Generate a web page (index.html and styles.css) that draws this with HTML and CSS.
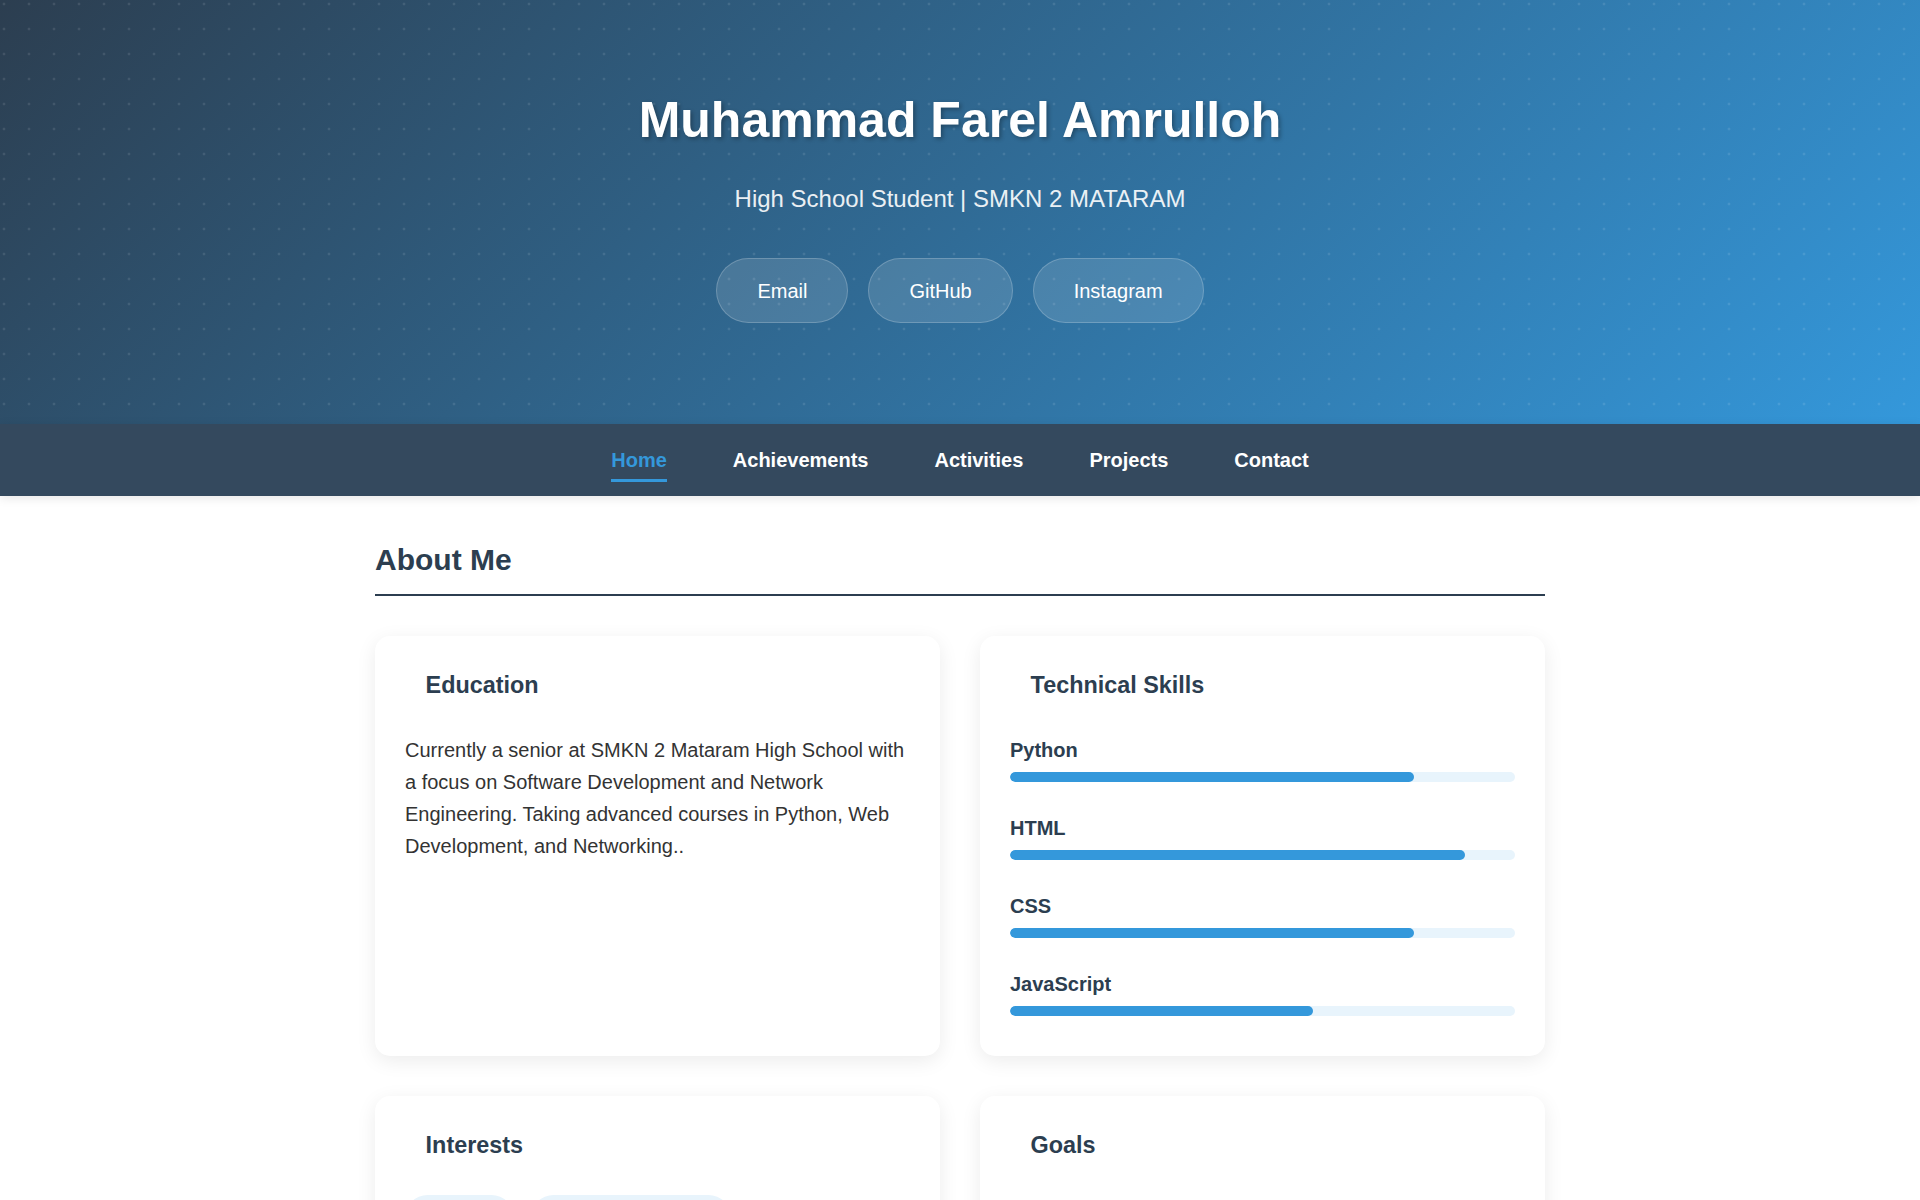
FILE: index.html
```html
<!DOCTYPE html>
<html lang="en">
<head>
<meta charset="UTF-8">
<title>Muhammad Farel Amrulloh</title>
<link rel="stylesheet" href="styles.css">
</head>
<body>
<header class="hero">
  <h1 class="hero-title">Muhammad Farel Amrulloh</h1>
  <p class="hero-subtitle">High School Student | SMKN 2 MATARAM</p>
  <div class="hero-links">
    <a class="pill" href="#">Email</a>
    <a class="pill" href="#">GitHub</a>
    <a class="pill" href="#">Instagram</a>
  </div>
</header>
<nav class="main-nav">
  <ul class="nav-list">
    <li><a class="nav-link active" href="#">Home</a></li>
    <li><a class="nav-link" href="#">Achievements</a></li>
    <li><a class="nav-link" href="#">Activities</a></li>
    <li><a class="nav-link" href="#">Projects</a></li>
    <li><a class="nav-link" href="#">Contact</a></li>
  </ul>
</nav>
<main class="container">
  <section class="section">
    <h2 class="section-title">About Me</h2>
    <div class="card-grid">
      <div class="card">
        <h3 class="card-title">Education</h3>
        <p class="card-text">Currently a senior at SMKN 2 Mataram High School with a focus on Software Development and Network Engineering. Taking advanced courses in Python, Web Development, and Networking..</p>
      </div>
      <div class="card">
        <h3 class="card-title">Technical Skills</h3>
        <div class="skill">
          <div class="skill-name">Python</div>
          <div class="skill-bar"><div class="skill-fill" style="width:80%"></div></div>
        </div>
        <div class="skill">
          <div class="skill-name">HTML</div>
          <div class="skill-bar"><div class="skill-fill" style="width:90%"></div></div>
        </div>
        <div class="skill">
          <div class="skill-name">CSS</div>
          <div class="skill-bar"><div class="skill-fill" style="width:80%"></div></div>
        </div>
        <div class="skill">
          <div class="skill-name">JavaScript</div>
          <div class="skill-bar"><div class="skill-fill" style="width:60%"></div></div>
        </div>
      </div>
      <div class="card">
        <h3 class="card-title">Interests</h3>
        <div class="tags">
          <span class="tag">Coding</span>
          <span class="tag">Web Development</span>
        </div>
      </div>
      <div class="card">
        <h3 class="card-title">Goals</h3>
        <ul class="goal-list">
          <li>Become a professional software developer</li>
          <li>Continue studying computer science</li>
        </ul>
      </div>
    </div>
  </section>
</main>
</body>
</html>
```
FILE: styles.css
```css
* {
  box-sizing: border-box;
}

body {
  margin: 0;
  font-family: "Liberation Sans", Arial, sans-serif;
  font-size: 20px;
  line-height: 1.6;
  color: #333;
  background: #fff;
}

.hero {
  background:
    radial-gradient(circle at 4px 4px, rgba(255, 255, 255, 0.1) 1.2px, transparent 1.7px) 0 0 / 25px 25px,
    linear-gradient(135deg, #2c3e50 0%, #3498db 100%);
  color: #fff;
  text-align: center;
  padding: 80px 20px 100.6px;
}

.hero-title {
  margin: 0 0 20px;
  font-size: 50px;
  font-weight: 700;
  line-height: 1.6;
  text-shadow: 2px 2px 4px rgba(0, 0, 0, 0.3);
}

.hero-subtitle {
  margin: 0 0 40px;
  font-size: 24px;
  opacity: 0.9;
}

.hero-links {
  display: flex;
  justify-content: center;
  gap: 20px;
}

.pill {
  color: #fff;
  text-decoration: none;
  font-size: 20px;
  line-height: 32px;
  padding: 15.5px 40px;
  border: 1px solid rgba(255, 255, 255, 0.2);
  border-radius: 50px;
  background: rgba(255, 255, 255, 0.13);
}

.main-nav {
  position: relative;
  background: #34495e;
  box-shadow: 0 2px 10px rgba(0, 0, 0, 0.1);
}

.nav-list {
  list-style: none;
  margin: 0;
  padding: 20px 0;
  display: flex;
  justify-content: center;
  gap: 66px;
}

.nav-link {
  position: relative;
  display: block;
  color: #fff;
  text-decoration: none;
  font-weight: 700;
  font-size: 20px;
  line-height: 32px;
}

.nav-link.active {
  color: #3498db;
}

.nav-link.active::after {
  content: "";
  position: absolute;
  left: 0;
  right: 0;
  bottom: -6px;
  height: 3px;
  background: #3498db;
}

.container {
  max-width: 1170px;
  margin: 0 auto;
  padding: 40px 0;
}

.section-title {
  margin: 0 0 40px;
  padding-bottom: 10px;
  border-bottom: 2px solid #2c3e50;
  font-size: 30px;
  line-height: 48px;
  color: #2c3e50;
}

.card-grid {
  display: grid;
  grid-template-columns: 1fr 1fr;
  gap: 40px;
}

.card {
  background: #fff;
  border-radius: 15px;
  padding: 31px 30px 30px;
  box-shadow: 0 5px 20px rgba(0, 0, 0, 0.08);
}

.card-title {
  margin: 0 0 30px;
  padding-left: 20.6px;
  font-size: 23.4px;
  line-height: 1.6;
  color: #2c3e50;
}

.card-text {
  margin: 0;
  color: #333;
}

.skill {
  margin-bottom: 30px;
}

.skill:last-child {
  margin-bottom: 10px;
}

.skill-name {
  margin-bottom: 6px;
  font-weight: 700;
  color: #2c3e50;
}

.skill-bar {
  height: 10px;
  background: #e8f4fc;
  border-radius: 5px;
  overflow: hidden;
}

.skill-fill {
  height: 100%;
  background: #3498db;
  border-radius: 5px;
}

.tags {
  display: flex;
  flex-wrap: wrap;
  gap: 17px;
}

.tag {
  background: #e8f4fc;
  color: #2c3e50;
  font-size: 18px;
  padding: 8px 26px;
  border-radius: 25px;
}

.goal-list {
  margin: 0;
  padding-left: 20px;
}
```
